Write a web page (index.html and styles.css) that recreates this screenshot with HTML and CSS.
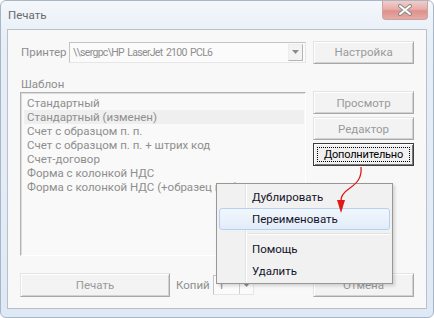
FILE: index.html
```html
<!DOCTYPE html>
<html lang="ru">
<head>
  <meta charset="UTF-8">
  <title>Печать</title>
  <link rel="stylesheet" href="styles.css">
</head>
<body>
  <div class="window">
    <div class="titlebar">
      <span class="title">Печать</span>
      <div class="close">
        <svg width="16" height="12" viewBox="0 0 16 12">
          <path d="M3 2 L13 10 M13 2 L3 10" stroke="#8a8a8a" stroke-width="4" stroke-linecap="round"/>
          <path d="M3 2 L13 10 M13 2 L3 10" stroke="#ffffff" stroke-width="2" stroke-linecap="round"/>
        </svg>
      </div>
    </div>

    <div class="client">
      <div class="row printer-row">
        <span class="label">Принтер</span>
        <div class="combo">
          <span class="combo-text">\\sergpc\HP LaserJet 2100 PCL6</span>
          <span class="combo-btn">
            <svg width="7" height="4" viewBox="0 0 7 4"><path d="M0 0 H7 L3.5 4 Z" fill="#8c8c8c"/></svg>
          </span>
        </div>
        <div class="btn btn-side">Настройка</div>
      </div>

      <div class="label group-label">Шаблон</div>

      <div class="row main-row">
        <ul class="list">
          <li>Стандартный</li>
          <li class="selected">Стандартный (изменен)</li>
          <li>Счет с образцом п. п.</li>
          <li>Счет с образцом п. п. + штрих код</li>
          <li>Счет-договор</li>
          <li>Форма с колонкой НДС</li>
          <li>Форма с колонкой НДС (+образец п.п.)</li>
        </ul>
        <div class="side-buttons">
          <div class="btn btn-side">Просмотр</div>
          <div class="btn btn-side">Редактор</div>
          <div class="btn btn-side btn-focus"><span class="focus-rect">Дополнительно</span></div>
        </div>
      </div>

      <div class="row bottom-row">
        <div class="btn btn-print">Печать</div>
        <span class="label copies-label">Копий</span>
        <div class="spin">
          <span class="spin-text">1</span>
          <span class="spin-btn">
            <svg width="5" height="3" viewBox="0 0 5 3"><path d="M0 0 H5 L2.5 3 Z" fill="#8c8c8c"/></svg>
          </span>
        </div>
        <div class="btn btn-side btn-cancel">Отмена</div>
      </div>
    </div>

    <div class="menu">
      <div class="menu-item">Дублировать</div>
      <div class="menu-item active">Переименовать</div>
      <div class="menu-sep"></div>
      <div class="menu-item">Помощь</div>
      <div class="menu-item">Удалить</div>
    </div>

    <svg class="pointer" width="434" height="318" viewBox="0 0 434 318">
      <path d="M361 167 C362 178 357 183 350 188 C344 192 340 196 341 202" fill="none" stroke="#e01818" stroke-width="1.3"/>
      <path d="M337 200 L345 200 L341 213 Z" fill="#e01818"/>
    </svg>
  </div>
</body>
</html>
```

FILE: styles.css
```css
body {
  margin: 0;
  background: #ffffff;
  font-family: Roboto, "Liberation Sans", sans-serif;
  font-size: 11.5px;
}

.window {
  position: relative;
  width: 434px;
  height: 318px;
  box-sizing: border-box;
  border: 1px solid #a9b6c5;
  border-radius: 6px;
  background: linear-gradient(#f4f7fb, #e6eef8 40px, #dfe9f5);
  display: flex;
  flex-direction: column;
  overflow: hidden;
}

.titlebar {
  height: 28px;
  display: flex;
  justify-content: space-between;
  align-items: flex-start;
  padding-left: 7px;
}

.title {
  margin-top: 7px;
  color: #6a6a6a;
}

.close {
  width: 46px;
  height: 19px;
  margin-right: 5px;
  box-sizing: border-box;
  border: 1px solid #c9a3a1;
  border-top: none;
  border-radius: 0 0 4px 4px;
  background: linear-gradient(#f1cdca, #e8aeaa 45%, #de918c 55%, #e7aaa6);
  display: flex;
  align-items: center;
  justify-content: center;
}

.client {
  flex: 1;
  margin: 0 6px 8px 6px;
  border: 1px solid #b9c0c8;
  background: #f8f8f8;
  padding: 11px 12px 0 12px;
  display: flex;
  flex-direction: column;
}

.row {
  display: flex;
}

.label {
  color: #8e8e8e;
}

.btn {
  box-sizing: border-box;
  height: 23px;
  border: 1px solid;
  border-color: #e4e4e4 #a8a8a8 #a8a8a8 #e4e4e4;
  box-shadow: inset 1px 1px #ffffff, inset -1px -1px #d2d2d2;
  background: #f3f3f3;
  color: #9a9a9a;
  display: flex;
  align-items: center;
  justify-content: center;
}

.btn-side {
  width: 101px;
}

/* printer row */
.printer-row {
  align-items: center;
  height: 22px;
}

.printer-row .label {
  width: 48px;
  padding-left: 1px;
}

.combo {
  box-sizing: border-box;
  width: 238px;
  height: 21px;
  margin-right: 7px;
  border: 1px solid;
  border-color: #c4c4c4 #e6e6e6 #e6e6e6 #c4c4c4;
  background: #fbfbfb;
  display: flex;
  align-items: center;
  justify-content: space-between;
}

.combo-text {
  padding-left: 3px;
  color: #8e8e8e;
  font-size: 10.5px;
  letter-spacing: -0.7px;
  word-spacing: 1.5px;
}

.combo-btn {
  box-sizing: border-box;
  width: 15px;
  height: 17px;
  margin-right: 2px;
  border: 1px solid;
  border-color: #ececec #b4b4b4 #b4b4b4 #ececec;
  background: #f3f3f3;
  display: flex;
  align-items: center;
  justify-content: center;
}

.group-label {
  margin-top: 13px;
  padding-left: 1px;
  line-height: 16px;
}

/* list and side buttons */
.main-row {
  margin-top: -1px;
  gap: 7px;
  align-items: flex-start;
}

.list {
  box-sizing: border-box;
  width: 286px;
  height: 164px;
  margin: 1px 0 0 0;
  padding: 3px 1px 0 3px;
  list-style: none;
  border: 1px solid;
  border-color: #b2b2b2 #ffffff #ffffff #b2b2b2;
  box-shadow: inset 1px 1px #dcdcdc;
  background: #f9f9f9;
  overflow: hidden;
}

.list li {
  line-height: 14px;
  padding-left: 3px;
  color: #8e8e8e;
  white-space: nowrap;
}

.list li.selected {
  background: #efefef;
}

.side-buttons {
  display: flex;
  flex-direction: column;
  gap: 3px;
}

.btn-focus {
  border: 1px solid #3c3c3c;
  box-shadow: inset 1px 1px #ffffff, inset -1px -1px #7a7a7a;
  background: #f0f0f0;
  color: #000000;
  padding: 3px;
  font-size: 11px;
  letter-spacing: -0.2px;
}

.focus-rect {
  flex: 1;
  align-self: stretch;
  border: 1px dotted #000000;
  display: flex;
  align-items: center;
  justify-content: center;
}

/* bottom row */
.bottom-row {
  margin-top: 17px;
  align-items: center;
  height: 24px;
}

.btn-print {
  width: 150px;
  height: 24px;
}

.copies-label {
  margin-left: 6px;
  width: 37px;
}

.spin {
  box-sizing: border-box;
  width: 41px;
  height: 20px;
  border: 1px solid;
  border-color: #c4c4c4 #e6e6e6 #e6e6e6 #c4c4c4;
  background: #fbfbfb;
  display: flex;
  align-items: center;
  justify-content: space-between;
}

.spin-text {
  padding-left: 4px;
  color: #8e8e8e;
}

.spin-btn {
  box-sizing: border-box;
  width: 14px;
  height: 18px;
  border-left: 1px solid #d0d0d0;
  display: flex;
  align-items: center;
  justify-content: center;
}

.btn-cancel {
  margin-left: auto;
  height: 24px;
}

/* context menu */
.menu {
  position: absolute;
  left: 215px;
  top: 182px;
  width: 177px;
  box-sizing: border-box;
  padding: 2px 2px 1px 2px;
  border: 1px solid #979797;
  background: linear-gradient(to right, #f1f1f1 28px, #e2e3e3 28px, #e2e3e3 29px, #ffffff 29px, #ffffff 30px, #f1f1f1 30px);
  box-shadow: 2px 2px 3px rgba(0, 0, 0, 0.15);
}

.menu-item {
  box-sizing: border-box;
  height: 22px;
  line-height: 20px;
  padding-left: 32px;
  border: 1px solid transparent;
  border-radius: 3px;
  color: #14142a;
}

.menu-item.active {
  border-color: #b6d1f1;
  background: linear-gradient(#f1f6fc, #e2ecf9);
}

.menu-sep {
  height: 8px;
  margin-left: 29px;
  background: linear-gradient(transparent 3px, #e0e0e0 3px, #e0e0e0 4px, #ffffff 4px, #ffffff 5px, transparent 5px);
}

.pointer {
  position: absolute;
  left: -1px;
  top: -1px;
  pointer-events: none;
}
```
